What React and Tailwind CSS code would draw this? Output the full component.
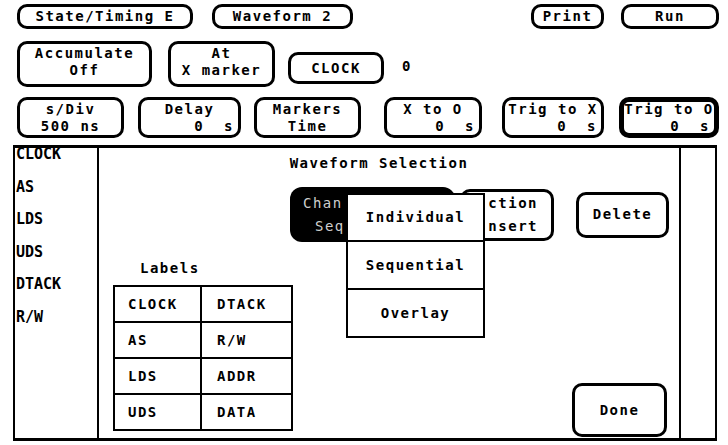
import React from 'react';

const Btn = ({ className = '', children }) => (
  <div
    className={`flex flex-col justify-center rounded-[10px] border-[3px] border-black bg-white leading-[17px] ${className}`}
  >
    {children}
  </div>
);

const Field = ({ title, value, className = '', thick = false }) => (
  <div
    className={`flex flex-col justify-center rounded-[10px] border-black bg-white leading-[17px] ${
      thick ? 'border-[5px]' : 'border-[3px]'
    } ${className}`}
  >
    <div className="text-center whitespace-pre">{title}</div>
    <div className="text-right pr-[4px] whitespace-pre">{value}</div>
  </div>
);

const labels = [
  ['CLOCK', 'DTACK'],
  ['AS', 'R/W'],
  ['LDS', 'ADDR'],
  ['UDS', 'DATA'],
];

const App = () => {
  return (
    <div
      className="w-[728px] h-[445px] bg-white text-black overflow-hidden font-bold text-[14px] tracking-[1.5px]"
      style={{ fontFamily: '"DejaVu Sans Mono", "Liberation Mono", monospace' }}
    >
      {/* row 1 */}
      <div className="flex pt-[4px] pl-[17px] h-[29px]">
        <Btn className="w-[176px] h-[25px] text-center">State/Timing E</Btn>
        <Btn className="w-[141px] h-[25px] ml-[19px] text-center">Waveform 2</Btn>
        <Btn className="w-[73px] h-[25px] ml-[178px] text-center">Print</Btn>
        <Btn className="w-[98px] h-[25px] ml-[17px] text-center">Run</Btn>
      </div>

      {/* row 2 */}
      <div className="flex items-start mt-[12px] pl-[17px] h-[46px]">
        <Btn className="w-[135px] h-[46px] text-center pb-[4px]">
          <div>Accumulate</div>
          <div>Off</div>
        </Btn>
        <Btn className="w-[107px] h-[46px] ml-[16px] text-center pb-[4px]">
          <div>At</div>
          <div>X marker</div>
        </Btn>
        <Btn className="w-[96px] h-[32px] ml-[13px] mt-[11px] text-center">CLOCK</Btn>
        <div className="ml-[18px] mt-[17px] leading-[16px]">0</div>
      </div>

      {/* row 3 */}
      <div className="flex mt-[10px] pl-[17px] h-[41px]">
        <Btn className="w-[107px] h-[41px] text-center">
          <div>s/Div</div>
          <div>500 ns</div>
        </Btn>
        <Field className="w-[103px] h-[41px] ml-[14px]" title="Delay" value="0  s" />
        <Btn className="w-[107px] h-[41px] ml-[13px] text-center">
          <div>Markers</div>
          <div>Time</div>
        </Btn>
        <Field className="w-[98px] h-[41px] ml-[23px]" title="X to O" value="0  s" />
        <Field className="w-[102px] h-[41px] ml-[20px]" title="Trig to X" value="0  s" />
        <Field className="w-[100px] h-[41px] ml-[15px]" title="Trig to O" value="0  s" thick />
      </div>

      {/* main area */}
      <div className="flex ml-[13px] mt-[7px] w-[704px] h-[296px] border-t-[3px] border-b-[3px] border-l-2 border-r-2 border-black">
        {/* label column */}
        <div className="w-[84px] border-r-2 border-black flex flex-col gap-y-[16.6px] -mt-[2px] pl-[1px] leading-[16px] tracking-[0px] text-[15px]">
          <div>CLOCK</div>
          <div>AS</div>
          <div>LDS</div>
          <div>UDS</div>
          <div>DTACK</div>
          <div>R/W</div>
        </div>

        {/* dialog */}
        <div className="relative w-[582px] border-r-2 border-black flex flex-col">
          <div className="pt-[7px] leading-[16px] text-center pr-[20px]">Waveform Selection</div>

          <div className="flex items-center mt-[16px] ml-[191px] h-[55px]">
            {/* partly hidden under the popup: only the visible part of the labels */}
            <div className="w-[165px] h-[55px] rounded-[12px] bg-black text-[#cfcfcf] font-normal leading-[23px] flex flex-col justify-center">
              <div className="pl-[13px]">Chan</div>
              <div className="pl-[25px]">Seq</div>
            </div>
            <Btn className="w-[94px] h-[52px] ml-[5px] leading-[23px] items-end pr-[13px]">
              <div>ction</div>
              <div>nsert</div>
            </Btn>
            <Btn className="w-[93px] h-[46px] ml-[22px] text-center">Delete</Btn>
          </div>

          <div className="flex flex-1">
            <div className="flex flex-col pt-[18px] ml-[14px]">
              <div className="leading-[16px] ml-[27px]">Labels</div>
              <div className="mt-[9px] w-[180px] border-2 border-black">
                {labels.map(([a, b], i) => (
                  <div
                    key={a}
                    className={`flex h-[34px] items-center ${i < labels.length - 1 ? 'border-b-2 border-black h-[36px]' : ''}`}
                  >
                    <div className="w-[87px] h-full border-r-2 border-black flex items-center pl-[13px]">{a}</div>
                    <div className="flex-1 pl-[15px]">{b}</div>
                  </div>
                ))}
              </div>
            </div>
            <Btn className="w-[95px] h-[54px] ml-auto mr-[12px] mb-[1px] self-end text-center">Done</Btn>
          </div>

          {/* popup menu */}
          <div className="absolute left-[247px] top-[45px] w-[139px] border-2 border-black bg-white">
            <div className="h-[47px] border-b-2 border-black flex items-center justify-center">Individual</div>
            <div className="h-[48px] border-b-2 border-black flex items-center justify-center">Sequential</div>
            <div className="h-[46px] flex items-center justify-center">Overlay</div>
          </div>
        </div>

        <div className="flex-1" />
      </div>
    </div>
  );
};

export default App;
